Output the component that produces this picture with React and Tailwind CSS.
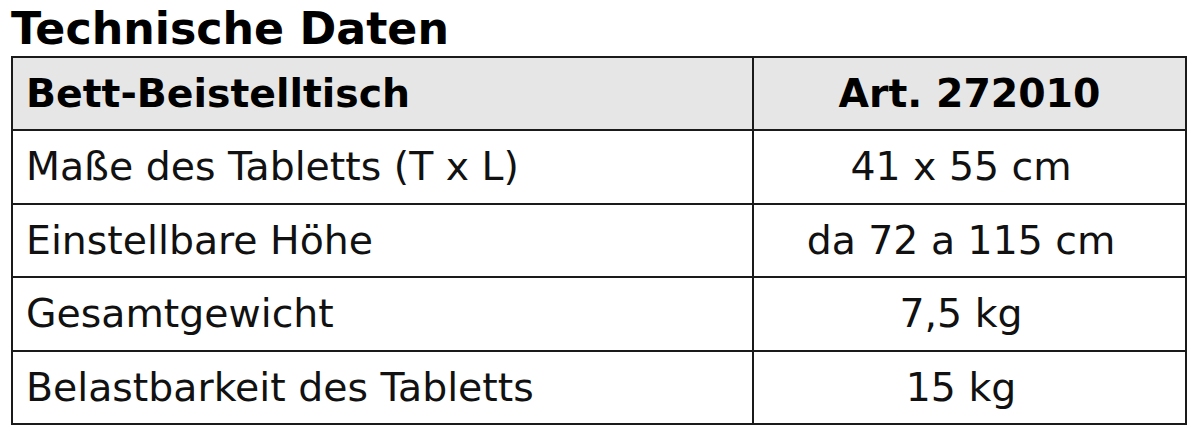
import React from "react";

const rows = [
  ["Maße des Tabletts (T x L)", "41 x 55 cm"],
  ["Einstellbare Höhe", "da 72 a 115 cm"],
  ["Gesamtgewicht", "7,5 kg"],
  ["Belastbarkeit des Tabletts", "15 kg"],
];

export default function App() {
  return (
    <div
      className="w-[1200px] h-[437px] bg-white text-[#111] overflow-hidden"
      style={{ fontFamily: '"DejaVu Sans", Verdana, sans-serif' }}
    >
      <div className="pl-[11px] pt-[2px] h-[56px] flex items-center">
        <h1 className="text-[44.3px] font-bold leading-none text-black">Technische Daten</h1>
      </div>
      <table className="ml-[11px] w-[1176px] border-collapse border-2 border-[#1a1a1a] table-fixed">
        <colgroup>
          <col className="w-[741px]" />
          <col />
        </colgroup>
        <thead>
          <tr className="h-[73px] bg-[#e6e6e6]">
            <th className="border-2 border-[#1a1a1a] text-left pl-[13px] text-[39.4px] font-bold text-black">
              Bett-Beistelltisch
            </th>
            <th className="border-2 border-[#1a1a1a] text-center text-[39.4px] font-bold text-black">
              Art. 272010
            </th>
          </tr>
        </thead>
        <tbody>
          {rows.map(([a, b]) => (
            <tr key={a} className="h-[73.5px]">
              <td className="border-2 border-[#1a1a1a] text-left pl-[13px] text-[39.4px] font-normal">
                {a}
              </td>
              <td className="border-2 border-[#1a1a1a] text-center pr-[17px] text-[39.4px] font-normal">
                {b}
              </td>
            </tr>
          ))}
        </tbody>
      </table>
    </div>
  );
}
